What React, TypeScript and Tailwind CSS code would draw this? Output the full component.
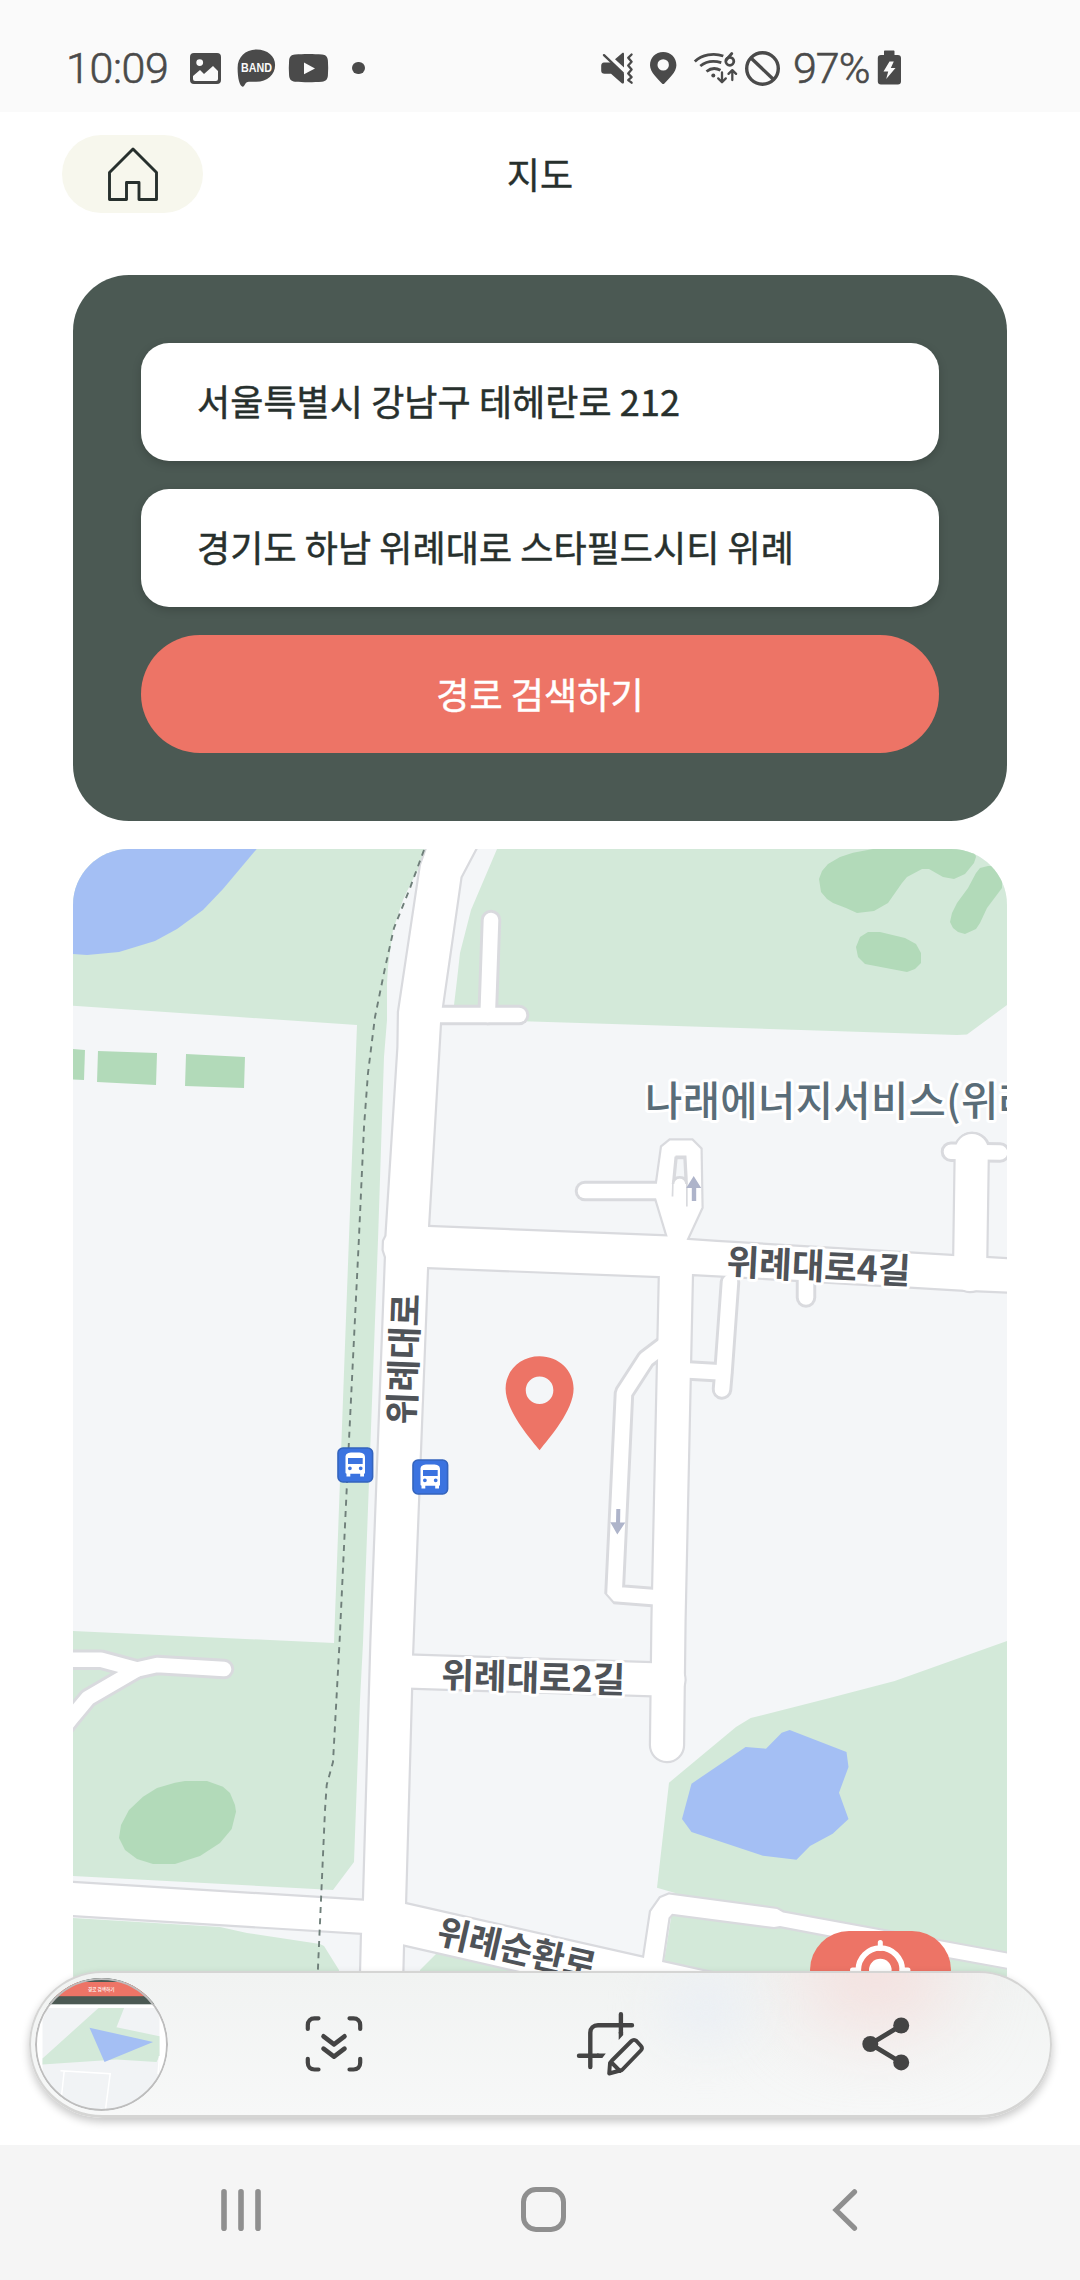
import React from "react";

const KR = "font-['Noto_Sans_CJK_KR','Noto_Sans_CJK_JP',sans-serif]";

/* ---------- status bar icons ---------- */

type IconProps = { box: string; className: string; children: React.ReactNode };

function Icon({ box, className, children }: IconProps) {
  return (
    <svg viewBox={box} className={`shrink-0 ${className}`} fill="none">
      {children}
    </svg>
  );
}

function StatusBar() {
  const ink = "#4a4a4a";
  return (
    <header className="flex h-[112px] items-center bg-[#fafafa] pl-[66px] pr-[179px] pt-[24px] text-[#4a4a4a] font-[Roboto,sans-serif]">
      <span className="w-[124px] text-[43px] leading-[50px] font-light tracking-[-0.4px] [-webkit-text-stroke:0.600px_#4a4a4a]">10:09</span>
      <Icon box="190 53 31 31" className="h-[31px] w-[31px]">
        <path
          fill={ink}
          fillRule="evenodd"
          d="M194 53h23a4 4 0 0 1 4 4v23a4 4 0 0 1-4 4h-23a4 4 0 0 1-4-4V57a4 4 0 0 1 4-4zM193 76v3a2 2 0 0 0 2 2h21a2 2 0 0 0 2-2v-8l-5-5-9 8-4-4zM199.700 59.200a3.400 3.400 0 1 0 0 6.800 3.400 3.400 0 0 0 0-6.800z"
        />
      </Icon>
      <Icon box="237 49 39 39" className="ml-[16px] h-[39px] w-[39px]">
        <path
          fill={ink}
          d="M256.500 49.500c11 0 18.600 6.500 18.600 15.500 0 9.500-7.800 16.800-18.800 16.800-4 0-7.500-.3-9.500.4-1.700.8-2.400 4.800-4.300 4.500-2.800-.8-4.900-8-4.900-18.700 0-11 8-18.500 18.900-18.500z"
        />
        <text x="241" y="71.800" textLength="31" lengthAdjust="spacingAndGlyphs" fontSize="13" fontWeight="700" fill="#fafafa" fontFamily="Liberation Sans">
          BAND
        </text>
      </Icon>
      <Icon box="287 53 41 30" className="ml-[12px] h-[30px] w-[41px]">
        <path
          fill={ink}
          fillRule="evenodd"
          d="M294 54.500c8-.7 19-.7 27 0 4 .4 5.500 2 5.900 6 .4 5 .4 10 0 15-.4 4-1.900 5.800-5.900 6.200-8 .6-19 .6-27 0-4-.4-5.500-2.200-5.900-6.200-.4-5-.4-10 0-15 .4-4 1.900-5.600 5.900-6zM303 62.500v11.800l11-5.900z"
        />
      </Icon>
      <span className="ml-[23px] h-[12.500px] w-[12.500px] rounded-full bg-[#4a4a4a]" />

      <Icon box="600 51 34 34" className="ml-auto h-[34px] w-[34px]">
        <path
          fill={ink}
          d="M615 59.300l7-6c1.200-.9 2-.4 2 .8v13.500zM604 62.500h5.500l2.500-.3L624 74v8.200c0 1.400-1.400 1.900-2.500.9L611 73.800h-6.500c-2.200 0-3.300-1-3.300-3v-5c0-2 1-3.100 2.800-3.300z"
        />
        <path stroke={ink} strokeWidth="2.400" strokeLinecap="round" d="M604 55.200l18.800 17.800" />
        <path
          stroke={ink}
          strokeWidth="2.300"
          strokeLinecap="round"
          strokeLinejoin="round"
          d="M631.600 54.500l-3.400 3.300 3.400 4-3.400 3.700 3.400 4-3.400 4 3.400 3.600-3.400 3 3.400 2.600"
        />
      </Icon>
      <Icon box="649 51 28 34" className="ml-[15px] h-[34px] w-[28px]">
        <path
          fill={ink}
          fillRule="evenodd"
          d="M663.200 52c7.700 0 13.200 5.800 13.200 13.300 0 7-8 13.700-12 18.200-.7.7-1.700.7-2.400 0-4-4.500-12-11.200-12-18.200C650 57.800 655.500 52 663.200 52zm0 7.200a5.700 5.700 0 1 0 0 11.400 5.700 5.700 0 0 0 0-11.400z"
        />
      </Icon>
      <Icon box="693 51 45 35" className="ml-[16px] h-[35px] w-[45px]">
        <g stroke={ink} strokeWidth="2.800" strokeLinecap="round" strokeLinejoin="round">
          <path strokeLinecap="butt" d="M694.800 61.500c7-7 19-9 28.500-5.500M700.300 66c6-4.800 13.500-5.600 21-3.300M706.500 71.500c4-3.200 9.500-3.700 14-1.200" />
          <path strokeWidth="2.300" d="M722 72.500V82m-3.800-3.600 3.800 3.800 3.800-3.800M732.300 80v-9.700m-3.800 3.600 3.800-3.800 3.800 3.800" />
          <circle cx="729.800" cy="61.300" r="4" />
          <path d="M731.800 53.500l-5.600 6.500" />
        </g>
        <circle cx="713.300" cy="75.500" r="2" fill={ink} />
      </Icon>
      <Icon box="744 48 37 37" className="ml-[6px] h-[37px] w-[37px]">
        <circle cx="762.500" cy="66.500" r="15.800" stroke={ink} strokeWidth="3.400" />
        <path stroke={ink} strokeWidth="3.400" d="M751.500 56.500l22 21" />
      </Icon>
      <span className="ml-[12px] w-[84px] text-[43px] leading-[50px] font-light tracking-[-1px] [-webkit-text-stroke:0.600px_#4a4a4a]">97%</span>
      <Icon box="877 50 24 36" className="h-[36px] w-[24px]">
        <path
          fill={ink}
          fillRule="evenodd"
          d="M885 50.500h8.500c.7 0 1 .4 1 1V55h3.300c2 0 3.200 1.200 3.200 3v23.500c0 2-1.200 3-3 3h-17c-2 0-3.200-1-3.200-3V58c0-1.800 1.200-3 3.200-3h3v-3.500c0-.6.4-1 1-1zM889.500 61.500l-6 10h4.700l-2 7.500 9.300-11h-4.700l3-6.500z"
        />
      </Icon>
    </header>
  );
}

function AppHeader() {
  return (
    <div className="grid h-[163px] grid-cols-3 items-start pl-[62px] pr-[62px] pt-[23px]">
      <button className="flex h-[78px] w-[141px] items-center justify-center rounded-full bg-[#f7f7ed]">
        <svg viewBox="0 0 54 56" className="h-[56px] w-[54px]" fill="none">
          <path
            d="M3.500 26.500 27 3l23.500 23.500v27h-17.500v-17h-12.500v17H3.500z"
            stroke="#27302d"
            strokeWidth="2.900"
            strokeLinejoin="round"
          />
        </svg>
      </button>
      <h1 className={`pt-[11px] text-center text-[36px] leading-[54px] font-normal text-[#27302d] [-webkit-text-stroke:0.400px_#27302d] ${KR}`}>지도</h1>
    </div>
  );
}

function SearchCard() {
  const field =
    "flex h-[118px] items-center rounded-[28px] bg-white pl-[56px] pb-[4px] text-[36px] tracking-[0.080px] font-normal text-[#27302d] [-webkit-text-stroke:0.500px_#27302d] shadow-[0_3px_10px_rgba(0,0,0,0.18)] whitespace-nowrap";
  return (
    <section className={`mx-[73px] flex h-[546px] flex-col gap-[28px] rounded-[56px] bg-[#4b5953] p-[68px] ${KR}`}>
      <div className={field}>서울특별시 강남구 테헤란로 212</div>
      <div className={field}>경기도 하남 위례대로 스타필드시티 위례</div>
      <button className="h-[118px] rounded-full bg-[#ed7466] pb-[2px] text-[36px] tracking-[0.080px] font-normal text-white [-webkit-text-stroke:0.500px_#ffffff]">
        경로 검색하기
      </button>
    </section>
  );
}

/* ---------- map ---------- */

const parks = [
  "73,849 430,849 422,862 410,885 403,900 393,930 388,967 387,983 387,1020 384,1057 378,1240 363,1643 360,1700 358,1753 354,1862 333,1890 73,1876 73,1631 334,1643 349,1237 357,1025 73,1005.700",
  "497,849 1007,849 1007,1005 967,1034.500 957,1035 540,1021.700 454,1019 454,1005 457,980 460,953 471,910",
  "73,1918 220,1927 247,1933 320,1944 324,1946 339,1970 339,2060 73,2060",
  "437,1953 420,1970 420,2060 600,2060 600,1980",
  "1007,1641 894.700,1681 825.800,1699 750.700,1718 736,1727 669,1782.700 657,1887.700 675,1893 664,1961.700 720,1975 720,2060 1007,2060",
];

const groves = [
  "873,849 853,852.700 840,857 828,864 822,871 819,879 821,892 827,899 833,903 846,908 857,913 874,911 888,903 902,883 907,877 922,869 929,869 943,877 954,879 965,874 974,863 976,857 974,849",
  "988,866 980,868 976,873 968,888 957,903 952,913 950,922 953,928 958,932 965,934 976,929 980,923 987,908 1002,888 1002,880 997,870 992,866",
  "868,932 880,932 905,938 916,944 921,953 921,963 915,969 907,972 865,964 858,957 856,947 860,937",
  "73,1049 85,1050 84,1080 73,1079.500",
  "98,1051 157,1053 156,1085 97,1082",
  "186,1054 245,1057 244,1088 185,1086",
  "175,1782.700 185,1781 207,1781 223,1786.700 230,1793 235,1805 236,1811.700 231.700,1829 220,1843 200,1856 175,1864 153,1864 137,1859 125,1850 119,1838 121,1825 129,1810 143,1796.700 157,1788",
];

const lakes = [
  "73,849 256.700,849 223,889 203,910 177,929 155,941 119,952 87,955 73,954",
  "789.700,1730 846.500,1752 848.500,1767 839,1792.700 848.500,1819 832.700,1833.700 810,1846 796.500,1859.700 763,1855.700 691.500,1832 682,1819 691.500,1783.700 745.600,1747 766,1748.700 781.700,1732.700",
];

const lanes = [
  "M491 920L487.700 1015",
  "M430 1015H519",
  "M585 1191H665",
  "M951 1151.700L1000 1152.500",
  "M730 1282L723.500 1372L722 1389.500",
  "M680 1370L723 1372.500",
  "M806 1265V1297.500",
  "M40 1659.700H101L137 1669.500L157 1665L224 1669",
  "M137 1669.500L88 1698L73 1716L50 1745",
];

const loopLane = "M675 1337L646 1359L624 1393L614.500 1594L665 1598";

const streets = [
  "M676 1270L668.500 1620L667 1745",
  "M392 1671L668.500 1679.700",
  "M40 1897L383 1918",
  "M971.800 1150L970 1275",
];

const blocks = [
  "430,840 421,865 399,1012 398.500,1047 386.500,1236 384,1241 383.700,1250 386,1257 371.500,1640 364,1900 362,1935 359,2060 400,2060 403,1944 405,1903 412,1655 427,1268 428,1226 440,1022 442,1006 460.500,877 480,840",
  "400,1226 428,1227 668,1236.500 688,1240 717,1242 952,1256 1020,1260 1020,1292 960,1289.500 740,1276.500 693,1274 659,1276 427,1267 400,1266",
  "380,1898 405,1904 644,1958 651,1911.500 660.500,1898 669,1894.500 777,1909 783,1912.500 1020,1956 1020,1970 827.500,1935 780,1926 774,1927 672,1913.700 668.500,1917.700 662,1962 820,1997 820,2040 402,1944 380,1938",
  "657,1183 662,1147 670,1140.500 692,1140.500 700.500,1149 701.500,1207.500 686,1241 669,1241 656,1198",
];

function BusStop({ x, y }: { x: number; y: number }) {
  return (
    <g transform={`translate(${x} ${y})`}>
      <rect x="1" y="1" width="34.600" height="34" rx="5" fill="#3b73e0" stroke="#3464bd" strokeWidth="1.600" />
      <path
        fill="#fff"
        fillRule="evenodd"
        d="M14 5.500h8.500c4 .4 5.500 1.700 5.500 5V25.500c0 .8-.4 1.200-1 1.300v2.700h-3.800V26.800h-9.900v2.700H9.500v-2.700c-.6-.2-1-.5-1-1.300V10.500c0-3.300 1.500-4.600 5.500-5zM11 11v6h14.700v-6zM12.900 19.400a1.900 1.900 0 1 0 0 3.800 1.900 1.900 0 0 0 0-3.800zm10.800 0a1.900 1.900 0 1 0 0 3.800 1.900 1.900 0 0 0 0-3.800z"
      />
    </g>
  );
}

function MapLabel({ at, width, children }: { at: string; width: number; children: string }) {
  return (
    <text
      transform={at}
      textLength={width}
      fontSize="35.500"
      fontWeight="700"
      fill="#4f5358"
      stroke="#fff"
      strokeWidth="6"
      strokeLinejoin="round"
      paintOrder="stroke"
    >
      {children}
    </text>
  );
}

function MapView() {
  const casing = "#d9dade";
  return (
    <section className="mx-[73px] mt-[28px] h-[1180px] overflow-hidden rounded-[56px] bg-[#f4f6f8]">
      <svg viewBox="73 849 934 1180" className={`block h-[1180px] w-[934px] ${KR}`} fill="none">
        {parks.map((p) => (
          <polygon key={p} points={p} fill="#d3e9d9" />
        ))}
        {groves.map((p) => (
          <polygon key={p} points={p} fill="#b2dab9" />
        ))}
        {lakes.map((p) => (
          <polygon key={p} points={p} fill="#a4bff4" />
        ))}

        <g stroke={casing} strokeLinecap="round" strokeLinejoin="round">
          {lanes.map((d) => (
            <path key={d} d={d} strokeWidth="20.500" />
          ))}
          <path d={loopLane} strokeWidth="20.500" strokeLinejoin="bevel" />
          {streets.map((d) => (
            <path key={d} d={d} strokeWidth="36.400" />
          ))}
          <circle cx="972.500" cy="1150" r="17" strokeWidth="2.500" />
          {blocks.map((p) => (
            <polygon key={p} points={p} strokeWidth="4.400" strokeLinejoin="miter" />
          ))}
        </g>
        <g stroke="#fff" strokeLinecap="round" strokeLinejoin="round">
          {lanes.map((d) => (
            <path key={d} d={d} strokeWidth="14.600" />
          ))}
          <path d={loopLane} strokeWidth="14.600" strokeLinejoin="bevel" />
          {streets.map((d) => (
            <path key={d} d={d} strokeWidth="32" />
          ))}
          {blocks.map((p) => (
            <polygon key={p} points={p} fill="#fff" stroke="none" />
          ))}
        </g>

        {/* turning loop */}
        <path d="M675.500 1156.500h10l1.200 22v28M675.500 1156.500l-2.300 24-.6 16" stroke={casing} strokeWidth="2" />
        <path d="M676.500 1158h8l1 20h-11z" fill="#f4f6f8" stroke={casing} strokeWidth="2.400" />
        <path d="M673.600 1208v-23.500a6.200 6.200 0 0 1 12.400 0v23.500z" fill="#fff" />
        <path d="M673 1184a6.700 6.700 0 0 1 13.500 0" stroke={casing} strokeWidth="2.600" />
        <path d="M693.700 1176l7.500 12h-5v13h-4.400v-13h-5.600z" fill="#aeb4ca" />
        <path d="M616.300 1509h4l-.2 13.500h5.200l-8 12-7-12.300h5.700z" fill="#aeb4ca" />

        {/* footpath */}
        <path
          d="M424 850L410 888L394 928L385 968L375 1017L368 1073L364 1127L358.700 1243L349 1440L339.500 1643L333 1762L326.700 1785L325 1810L317 1990"
          stroke="#6f7f7a"
          strokeWidth="1.900"
          strokeDasharray="6 5.350"
        />

        <text
          x="645"
          y="1115.500"
          fontSize="40.500"
          fontWeight="500"
          letterSpacing="0.400"
          fill="#5a6d78"
          stroke="#fff"
          strokeWidth="6"
          strokeLinejoin="round"
          paintOrder="stroke"
        >
          나래에너지서비스(위례)
        </text>
        <MapLabel at="translate(726 1274.500) rotate(2.900)" width={184}>위례대로4길</MapLabel>
        <MapLabel at="translate(441 1688) rotate(1.500)" width={184}>위례대로2길</MapLabel>
        <MapLabel at="translate(435 1943.500) rotate(13)" width={162}>위례순환로</MapLabel>
        <MapLabel at="translate(414.500 1425) rotate(-88)" width={131}>위례대로</MapLabel>

        <BusStop x={337} y={1447} />
        <BusStop x={412} y={1459} />

        <path
          fill="#ed7466"
          fillRule="evenodd"
          d="M539.600 1356.300c19 0 34 14 34 32.200 0 22-24 49-34 61.800-10-12.800-34-39.800-34-61.800 0-18.200 15-32.200 34-32.200zm0 20.200a13.800 13.800 0 1 0 0 27.600 13.800 13.800 0 0 0 0-27.600z"
        />

        {/* current-location button */}
        <rect x="810" y="1931" width="141" height="78" rx="39" fill="#ed7466" />
        <circle cx="880.300" cy="1970" r="22" stroke="#fff" strokeWidth="5.600" />
        <circle cx="880.300" cy="1970" r="11.300" fill="#fff" />
        <path d="M880.300 1942.500v6M852.500 1970h6M902 1970h6" stroke="#fff" strokeWidth="5" strokeLinecap="round" />
      </svg>
    </section>
  );
}

/* ---------- screenshot toolbar ---------- */

function Thumbnail() {
  return (
    <div className="relative ml-[4px] h-[133px] w-[133px] shrink-0 overflow-hidden rounded-full bg-white">
      <svg viewBox="35.500 1977 133 133" className={`h-[133px] w-[133px] ${KR}`} fill="none">
        <rect x="35" y="1976" width="134" height="27.300" fill="#4b5953" />
        <rect x="46" y="1981" width="112" height="14.200" fill="#ed7466" />
        <text x="88.500" y="1989.800" fontSize="4.600" fontWeight="500" fill="#fff">
          경로 검색하기
        </text>
        <rect x="43" y="2007" width="117" height="110" fill="#f1f3f5" />
        <path fill="#fff" d="M43 2007h5l-5 12z" />
        <path fill="#d3e9d9" d="M99 2007h25.600L117 2026.300l43 8.900V2055l-3 6-40-2.500-74 5v-6z" />
        <path fill="#a4bff4" d="M90 2026.700l63.600 14.300-48.600 20z" />
        <path stroke="#fff" strokeWidth="1.500" d="M61 2069.700l49.700 3-5 38M64.700 2070l-3 28M160 2055l-1.500 18" />
      </svg>
      <div className="absolute inset-0 rounded-full border-2 border-[#bdbdbd]" />
    </div>
  );
}

function CaptureToolbar() {
  const ink = "#444444";
  const cell = "flex w-[276px] shrink-0 items-center justify-center";
  return (
    <div className="absolute left-[29px] top-[1971px] h-[147px] w-[1023px] rounded-full shadow-[0_4px_9px_rgba(0,0,0,0.22)]">
      <div className="relative flex h-full w-full items-center overflow-hidden rounded-full border-2 border-b-[3px] border-[#d5d5d4] bg-linear-to-b from-[#f1f3f2] to-[#f7f8f8]">
        <div className="absolute left-[770px] top-[-50px] h-[105px] w-[150px] rounded-full bg-[#f4dfdd] blur-2xl" />
        <div className="absolute left-[630px] top-[0px] h-[70px] w-[90px] rounded-full bg-[#ebeff4] blur-xl" />
        <Thumbnail />
        <div className="relative ml-[28px] flex">
          <button className={cell}>
            <svg viewBox="305 2016 58 57" className="h-[57px] w-[58px]" fill="none">
              <g stroke={ink} strokeWidth="4.200" strokeLinecap="round" strokeLinejoin="round">
                <path d="M318.500 2018.300h-4c-4 0-6.700 2.700-6.700 6.700v4M349.500 2018.300h4c4 0 6.700 2.700 6.700 6.700v4M318.500 2069.500h-4c-4 0-6.700-2.700-6.700-6.700v-4M349.500 2069.500h4c4 0 6.700-2.700 6.700-6.700v-4" />
                <path strokeWidth="4.600" d="M323.500 2036.300l10.500 8 10.500-8M323.500 2048.700l10.500 8 10.500-8" />
              </g>
            </svg>
          </button>
          <button className={cell}>
            <svg viewBox="575 2012 70 66" className="h-[66px] w-[70px]" fill="none">
              <g stroke={ink} strokeWidth="4.400" strokeLinecap="round" strokeLinejoin="round">
                <path d="M632 2026.300h-34c-4.600 0-7.700 3-7.700 7.300V2068" />
                <path d="M620.900 2015.200V2034M579 2056.800h19" />
                <path strokeWidth="3.900" d="M612 2061.500l19.500-19.500c1.500-1.500 3.500-1.500 5 0l4.300 4.800c1.400 1.500 1.400 3.200 0 4.700L622 2071l-12.800 3.500 .8-10.500zM611 2063l9 9" />
              </g>
              <path fill={ink} d="M618.700 2033h4.400l.1 3-4.500 5zM597 2054.600h8.800l-3.500 4.400H597z" />
            </svg>
          </button>
          <button className={cell}>
            <svg viewBox="862 2016 48 56" className="h-[56px] w-[48px]" fill={ink}>
              <path d="M901 2025.500l-30.500 18.500 30.500 18.500" stroke={ink} strokeWidth="4.800" fill="none" />
              <circle cx="870.300" cy="2044" r="8" />
              <circle cx="901.200" cy="2025.500" r="8" />
              <circle cx="901.200" cy="2062.400" r="8" />
            </svg>
          </button>
        </div>
      </div>
    </div>
  );
}

function NavBar() {
  const cell = "flex w-[302px] items-center justify-center";
  return (
    <nav className="flex h-[135px] bg-[#f5f5f5] pl-[90px] pb-[6px]">
      <button className={cell}>
        <svg viewBox="0 0 40 42" className="h-[42px] w-[40px]" stroke="#8f8f8f" strokeWidth="5.600" strokeLinecap="round">
          <path d="M3 2.800v36.400M20 2.800v36.400M37 2.800v36.400" />
        </svg>
      </button>
      <button className={cell}>
        <span className="h-[45px] w-[45px] rounded-[15px] border-[5.600px] border-[#8f8f8f]" />
      </button>
      <button className={cell}>
        <svg viewBox="0 0 26 44" className="h-[44px] w-[26px]" fill="none" stroke="#8f8f8f" strokeWidth="5.200" strokeLinecap="round">
          <path d="M22.500 3.800L4 22l18.500 18.200" />
        </svg>
      </button>
    </nav>
  );
}

export default function App() {
  return (
    <div className="relative flex h-[2280px] w-[1080px] flex-col overflow-hidden bg-white">
      <StatusBar />
      <AppHeader />
      <SearchCard />
      <MapView />
      <div className="mt-auto">
        <NavBar />
      </div>
      <CaptureToolbar />
    </div>
  );
}
